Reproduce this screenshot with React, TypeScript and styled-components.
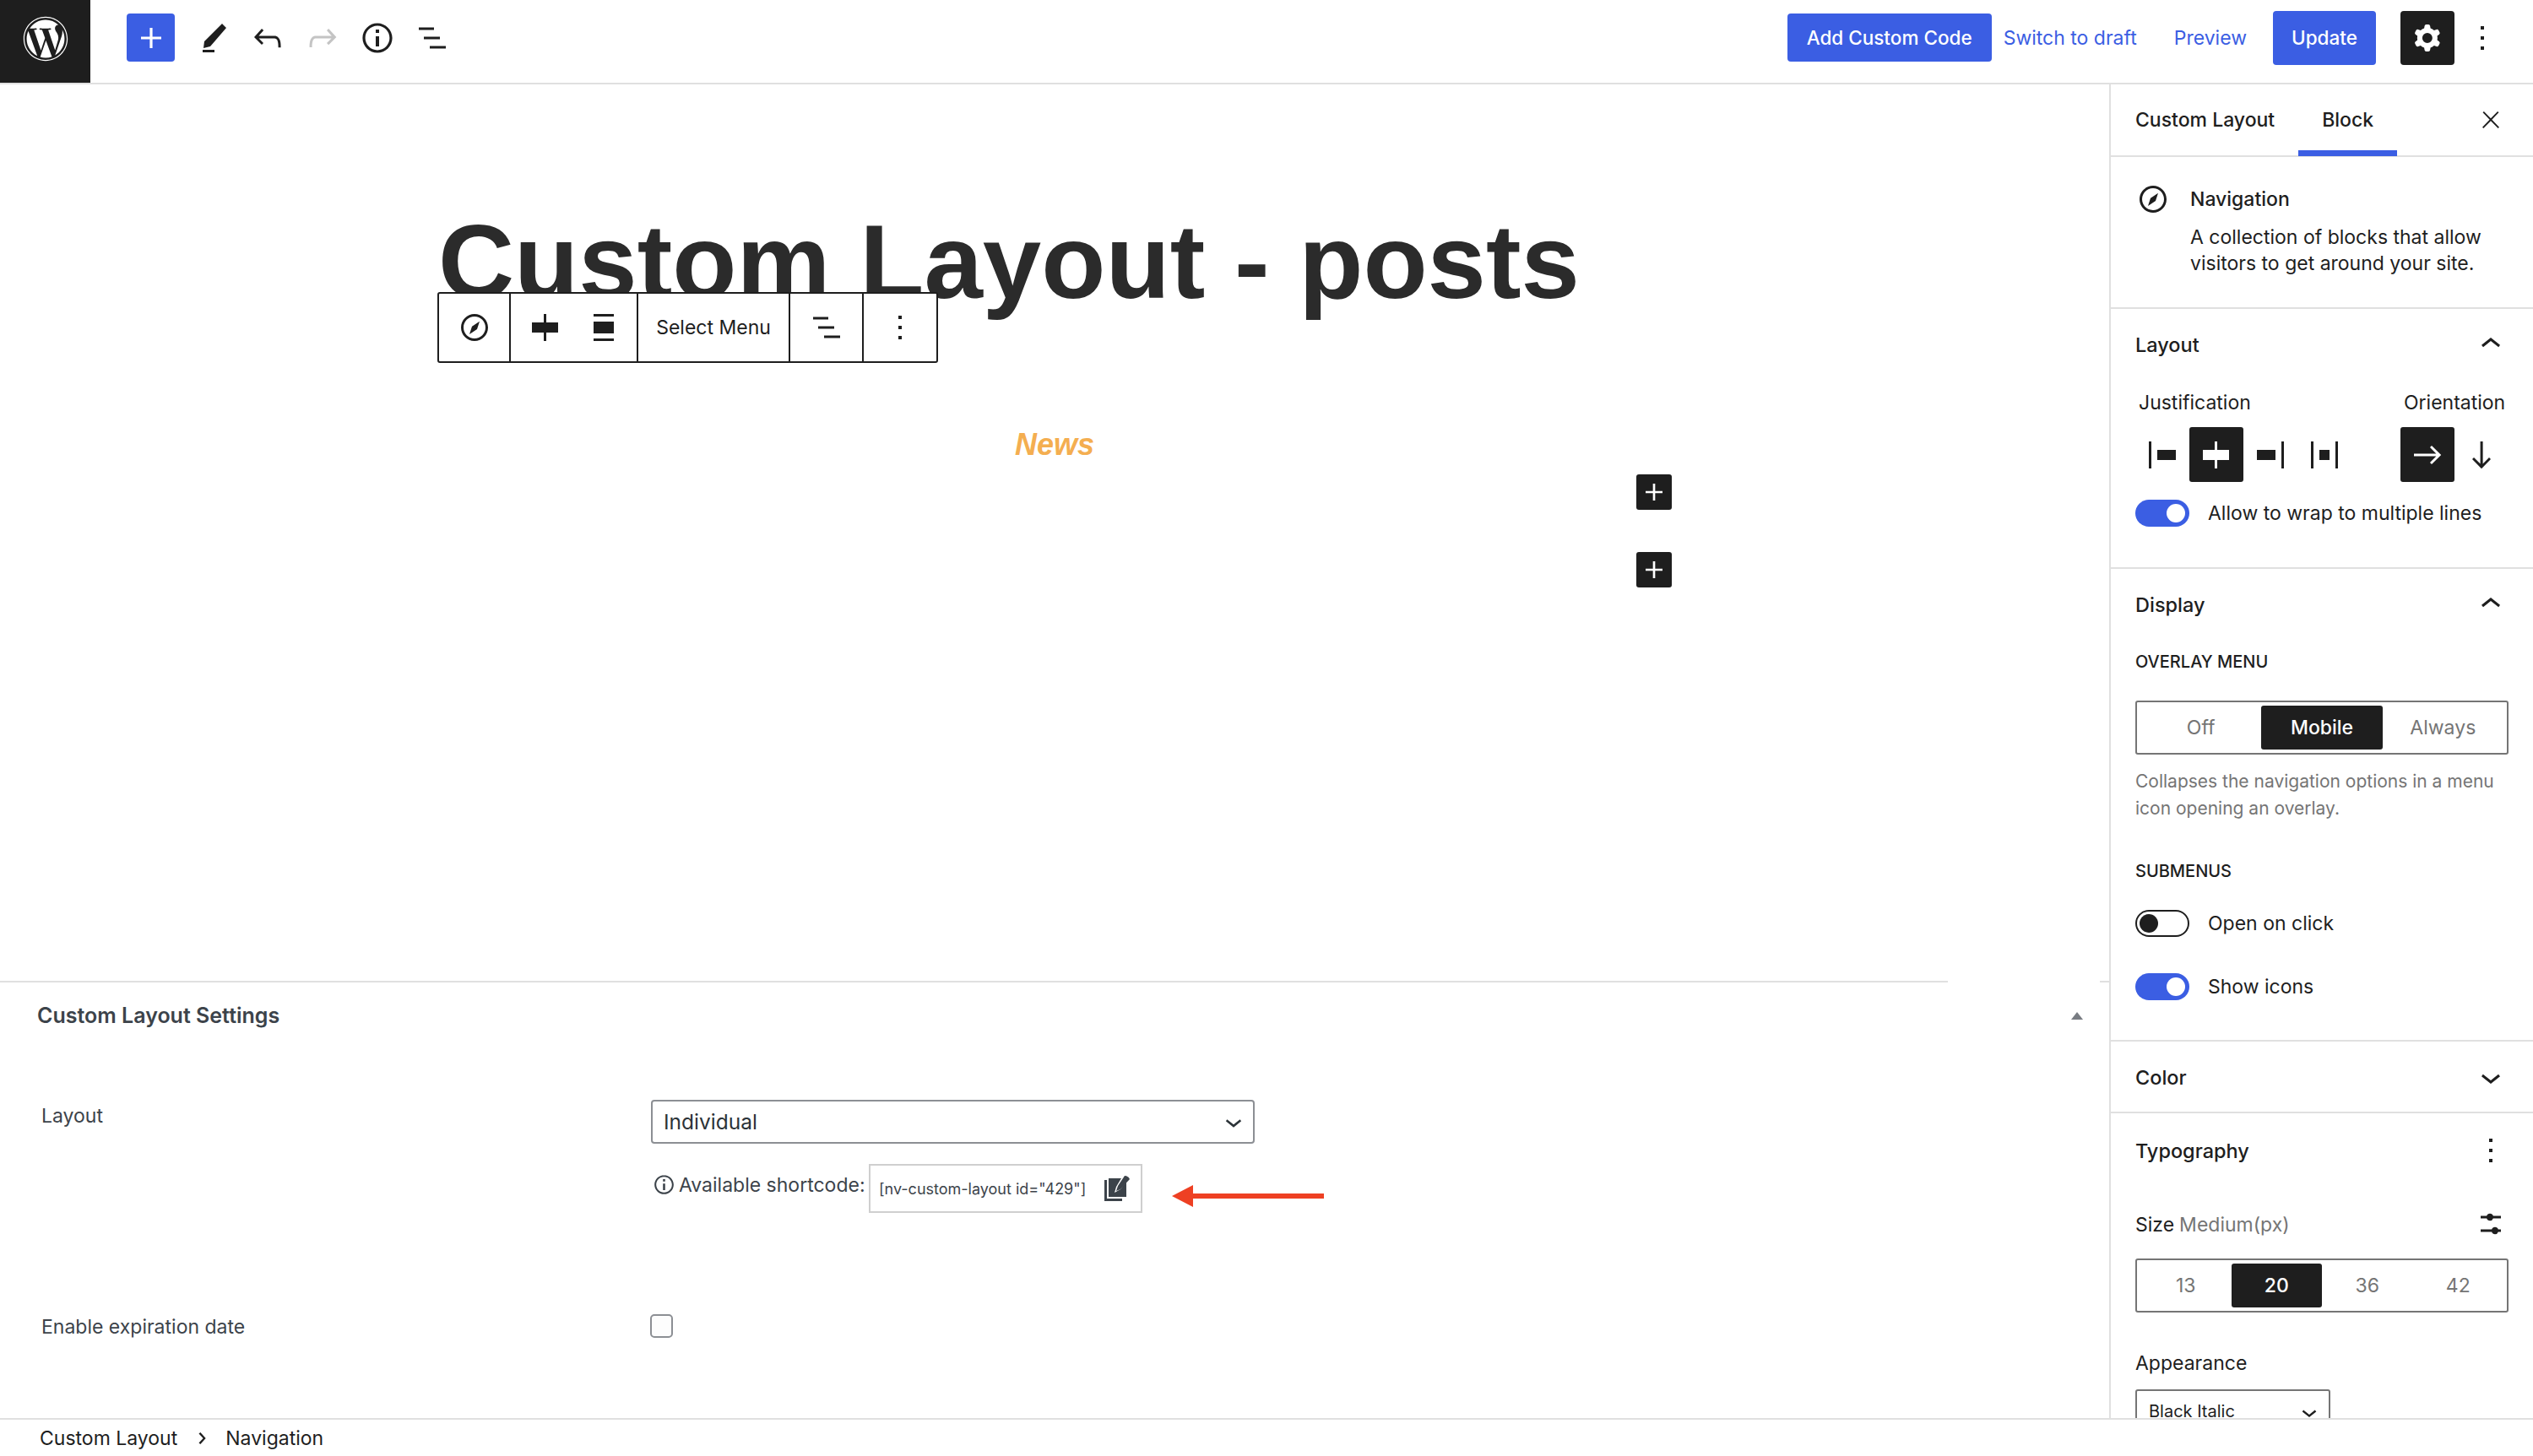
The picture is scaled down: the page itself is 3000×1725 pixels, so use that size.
import React from "react";
import styled, { createGlobalStyle } from "styled-components";
import { FaWordpress } from "react-icons/fa";

const GlobalStyle = createGlobalStyle`
  html, body {
    margin: 0;
    padding: 0;
    width: 3000px;
    height: 1725px;
    overflow: hidden;
    background: #fff;
  }
  * { box-sizing: border-box; }
  svg { flex: none; }
  body {
    font-family: "Inter", "Liberation Sans", sans-serif;
    color: #1e1e1e;
  }
`;

const BLUE = "#3b5ee3";
const DARK = "#1e1e1e";
const LINE = "#e0e0e0";

const Page = styled.div`
  width: 3000px;
  height: 1725px;
  display: flex;
  flex-direction: column;
`;

/* header */
const Header = styled.header`
  height: 100px;
  flex: none;
  display: flex;
  align-items: center;
  padding-bottom: 9px;
  padding-right: 36px;
  border-bottom: 2px solid ${LINE};
`;

const LogoTile = styled.div`
  align-self: flex-start;
  width: 107px;
  height: 98px;
  background: ${DARK};
  color: #fff;
  display: flex;
  align-items: center;
  justify-content: center;
  padding-bottom: 7px;
`;

const InserterButton = styled.button`
  width: 57px;
  height: 57px;
  margin: 0 12px 0 43px;
  border: 0;
  padding: 0;
  border-radius: 4px;
  background: ${BLUE};
  color: #fff;
  display: flex;
  align-items: center;
  justify-content: center;
`;

const ToolButton = styled.button<{ $muted?: boolean }>`
  width: 65px;
  height: 57px;
  border: 0;
  padding: 0;
  background: none;
  color: ${(p) => (p.$muted ? "#c4c4c4" : DARK)};
  display: flex;
  align-items: center;
  justify-content: center;
`;

const HeaderRight = styled.div`
  margin-left: auto;
  display: flex;
  align-items: center;
`;

const PrimaryButton = styled.button<{ $tall?: boolean; $w: number; $ml?: number }>`
  width: ${(p) => p.$w}px;
  height: ${(p) => (p.$tall ? 64 : 57)}px;
  margin-left: ${(p) => p.$ml ?? 0}px;
  border: 0;
  padding: 0;
  border-radius: 4px;
  background: ${BLUE};
  color: #fff;
  font: 500 22.5px "Inter", sans-serif;
`;

const TextLink = styled.span<{ $ml: number }>`
  margin-left: ${(p) => p.$ml}px;
  color: ${BLUE};
  font-size: 23px;
  white-space: nowrap;
`;

const GearButton = styled.button`
  width: 64px;
  height: 64px;
  margin-left: 29px;
  border: 0;
  padding: 0;
  border-radius: 4px;
  background: ${DARK};
  color: #fff;
  display: flex;
  align-items: center;
  justify-content: center;
`;

const MoreButton = styled.span`
  width: 48px;
  height: 48px;
  margin-left: 9px;
  display: flex;
  align-items: center;
  justify-content: center;
`;

/* body */
const Body = styled.div`
  flex: 1;
  min-height: 0;
  display: flex;
`;

const Main = styled.main`
  width: 2498px;
  flex: none;
  display: flex;
  flex-direction: column;
`;

const Canvas = styled.div`
  height: 1062px;
  flex: none;
`;

const BlockColumn = styled.div`
  position: relative;
  width: 1460px;
  margin: 0 auto;
  display: flex;
  flex-direction: column;
`;

const PostTitle = styled.h1`
  margin: 147px 0 0;
  font: 700 124.8px/125px "Liberation Sans", Arial, sans-serif;
  color: #2b2b2b;
  white-space: nowrap;
`;

const BlockToolbar = styled.div`
  position: absolute;
  left: -1px;
  top: 246px;
  width: 593px;
  height: 84px;
  display: flex;
  align-items: stretch;
  background: #fff;
  border: 2px solid ${DARK};
  border-radius: 3px;
`;

const ToolbarGroup = styled.div<{ $w: number; $last?: boolean }>`
  width: ${(p) => p.$w}px;
  flex: none;
  display: flex;
  align-items: center;
  justify-content: center;
  border-right: ${(p) => (p.$last ? "0" : `2px solid ${DARK}`)};
  font-size: 23px;
`;

const ToolbarIcon = styled.span`
  width: 67px;
  margin-left: 2px;
  display: flex;
  justify-content: center;
`;

const NewsLink = styled.div`
  margin-top: 133px;
  text-align: center;
  font: italic 700 36px/44px "Liberation Sans", Arial, sans-serif;
  color: #f4ae50;
`;

const AppenderButton = styled.button<{ $mt: number }>`
  align-self: flex-end;
  width: 42px;
  height: 42px;
  margin-top: ${(p) => p.$mt}px;
  margin-right: -1px;
  border: 0;
  padding: 0;
  border-radius: 3px;
  background: ${DARK};
  color: #fff;
  display: flex;
  align-items: center;
  justify-content: center;
`;

/* settings metabox */
const MetaBox = styled.section`
  flex: 1;
  min-height: 0;
  overflow: hidden;
`;

const MetaRule = styled.div`
  display: flex;
  gap: 180px;
`;

const MetaRuleSegment = styled.div<{ $w?: number }>`
  height: 2px;
  background: ${LINE};
  ${(p) => (p.$w ? `width: ${p.$w}px;` : "flex: 1;")}
`;

const MetaHead = styled.div`
  height: 78px;
  padding: 0 31px 0 44px;
  display: flex;
  align-items: center;
  justify-content: space-between;
  font-size: 25px;
  font-weight: 600;
  color: #3c434a;
`;

const Triangle = styled.span`
  width: 0;
  height: 0;
  border-left: 7px solid transparent;
  border-right: 7px solid transparent;
  border-bottom: 9px solid #787c82;
`;

const MetaField = styled.div<{ $mt: number }>`
  margin-top: ${(p) => p.$mt}px;
  padding-left: 49px;
  display: grid;
  grid-template-columns: 722px 1fr;
`;

const MetaLabel = styled.div<{ $pt?: number }>`
  padding-top: ${(p) => p.$pt ?? 0}px;
  font-size: 23px;
  line-height: 30px;
  color: #3c434a;
`;

const MetaSelect = styled.div`
  width: 715px;
  height: 52px;
  padding: 0 3px 0 13px;
  display: flex;
  align-items: center;
  justify-content: space-between;
  border: 2px solid #8c8f94;
  border-radius: 4px;
  font-size: 24.5px;
  color: #2c3338;
`;

const ShortcodeRow = styled.div`
  margin-top: 24px;
  display: flex;
  align-items: flex-start;
`;

const ShortcodeLabel = styled.div`
  width: 258px;
  padding-top: 9px;
  display: flex;
  align-items: center;
  gap: 2px;
  font-size: 23px;
  line-height: 30px;
  color: #3c434a;
  white-space: nowrap;
`;

const ShortcodeBox = styled.div`
  width: 324px;
  height: 58px;
  padding: 0 12px 0 10px;
  display: flex;
  align-items: center;
  justify-content: space-between;
  border: 2px solid #cfcfcf;
  font-size: 18px;
  color: #3c434a;
  white-space: nowrap;
`;

const ArrowMark = styled.svg`
  margin: 25px 0 0 35px;
  flex: none;
`;

const Checkbox = styled.span`
  display: block;
  width: 27px;
  height: 28px;
  margin-left: -1px;
  border: 2px solid #8c8f94;
  border-radius: 5px;
  background: #fdfdfd;
`;

/* sidebar */
const Sidebar = styled.aside`
  width: 502px;
  flex: none;
  border-left: 2px solid ${LINE};
  overflow: hidden;
`;

const TabBar = styled.div`
  height: 86px;
  display: flex;
  align-items: stretch;
  padding-left: 1px;
  border-bottom: 2px solid ${LINE};
`;

const Tab = styled.div<{ $active?: boolean }>`
  padding: 6px 28px 0;
  height: 85px;
  display: flex;
  align-items: center;
  font-size: 23px;
  font-weight: 500;
  border-bottom: 7px solid ${(p) => (p.$active ? BLUE : "transparent")};
`;

const CloseSlot = styled.span`
  margin: 0 26px 0 auto;
  width: 48px;
  display: flex;
  align-items: flex-start;
  justify-content: center;
  padding-top: 26px;
`;

const BlockCard = styled.div`
  padding: 35px 20px 36px 26px;
  display: flex;
  gap: 20px;
  border-bottom: 2px solid ${LINE};
`;

const CardIcon = styled.span`
  width: 48px;
  height: 30px;
  flex: none;
  display: flex;
  align-items: center;
  justify-content: center;
`;

const CardTitle = styled.div`
  font-size: 23px;
  font-weight: 500;
  line-height: 30px;
`;

const CardText = styled.div`
  margin-top: 15px;
  font-size: 23px;
  line-height: 31px;
`;

const Section = styled.section<{ $pt?: number; $pb?: number }>`
  padding: ${(p) => p.$pt ?? 0}px 29px ${(p) => p.$pb ?? 48}px;
  border-bottom: 2px solid ${LINE};
`;

const SectionHead = styled.div`
  height: 83px;
  padding: 27px 0 26px;
  display: flex;
  align-items: center;
  justify-content: space-between;
  font-size: 23.5px;
  font-weight: 500;
`;

const HeadIcon = styled.span`
  width: 48px;
  height: 48px;
  margin-right: -3px;
  display: flex;
  align-items: center;
  justify-content: center;
`;

const ControlsRow = styled.div`
  margin-top: 13px;
  display: flex;
  justify-content: space-between;
`;

const ControlGroup = styled.div`
  display: flex;
  flex-direction: column;
`;

const GroupLabel = styled.div`
  padding-left: 4px;
  font-size: 23px;
  line-height: 30px;
`;

const IconChoices = styled.div`
  margin-top: 14px;
  display: flex;
`;

const IconChoice = styled.span<{ $active?: boolean }>`
  width: 64px;
  height: 65px;
  display: flex;
  align-items: center;
  justify-content: center;
  border-radius: 3px;
  background: ${(p) => (p.$active ? DARK : "transparent")};
  color: ${(p) => (p.$active ? "#fff" : DARK)};
`;

const ToggleRow = styled.div<{ $mt: number }>`
  margin-top: ${(p) => p.$mt}px;
  display: flex;
  align-items: center;
  gap: 22px;
  font-size: 23px;
`;

const ToggleTrack = styled.span<{ $on?: boolean }>`
  position: relative;
  width: 64px;
  height: 32px;
  flex: none;
  border-radius: 16px;
  border: ${(p) => (p.$on ? "0" : `2px solid ${DARK}`)};
  background: ${(p) => (p.$on ? BLUE : "#fff")};
`;

const ToggleKnob = styled.span<{ $on?: boolean }>`
  position: absolute;
  top: ${(p) => (p.$on ? 5 : 3)}px;
  ${(p) => (p.$on ? "right: 5px;" : "left: 3px;")}
  width: 22px;
  height: 22px;
  border-radius: 50%;
  background: ${(p) => (p.$on ? "#fff" : DARK)};
`;

const CapsLabel = styled.div<{ $mt: number }>`
  margin-top: ${(p) => p.$mt}px;
  font-size: 20px;
  font-weight: 500;
  line-height: 26px;
`;

const Segmented = styled.div<{ $mt: number }>`
  margin-top: ${(p) => p.$mt}px;
  height: 64px;
  padding: 4px;
  display: flex;
  border: 2px solid #757575;
  border-radius: 3px;
`;

const Segment = styled.span<{ $active?: boolean }>`
  flex: 1;
  display: flex;
  align-items: center;
  justify-content: center;
  border-radius: 3px;
  background: ${(p) => (p.$active ? DARK : "transparent")};
  color: ${(p) => (p.$active ? "#fff" : "#757575")};
  font-size: 23px;
  font-weight: ${(p) => (p.$active ? 500 : 400)};
`;

const HelpText = styled.div`
  margin-top: 16px;
  font-size: 21px;
  line-height: 32px;
  color: #757575;
  white-space: nowrap;
`;

const SizeRow = styled.div`
  margin-top: 32px;
  height: 30px;
  display: flex;
  align-items: center;
  justify-content: space-between;
  font-size: 23px;
`;

const SizeHint = styled.span`
  color: #757575;
  margin-left: 6px;
`;

const FieldLabel = styled.div`
  margin-top: 45px;
  font-size: 23px;
  line-height: 30px;
`;

const AppearanceSelect = styled.div`
  margin-top: 16px;
  width: 231px;
  height: 64px;
  padding: 7px 5px 0 14px;
  display: flex;
  align-items: flex-start;
  justify-content: space-between;
  border: 2px solid #757575;
  border-radius: 3px;
  font-size: 20px;
  line-height: 34px;
`;

/* footer */
const Breadcrumbs = styled.footer`
  height: 45px;
  flex: none;
  display: flex;
  align-items: center;
  padding-left: 47px;
  border-top: 2px solid ${LINE};
  font-size: 23px;
`;

const CrumbSep = styled.span`
  width: 57px;
  display: flex;
  justify-content: center;
`;

/* gutenberg style icons, all drawn on a 24 unit grid */
const paths = {
  plus: "M18 11.2h-5.2V6h-1.6v5.2H6v1.6h5.2V18h1.6v-5.2H18z",
  undo: "M18.3 11.7c-.6-.6-1.4-.9-2.3-.9H6.7l2.9-3.3-1.1-1-4.5 5L8.5 16l1-1-2.7-2.7H16c.5 0 .9.2 1.3.5 1 1 1 3.4 1 4.5v.3h1.5v-.2c0-1.5 0-4.3-1.5-5.7z",
  redo: "M15.6 6.5l-1.1 1 2.9 3.3H8c-.9 0-1.7.3-2.3.9-1.4 1.5-1.4 4.2-1.4 5.6v.2h1.5v-.3c0-1.1 0-3.5 1-4.5.3-.3.7-.5 1.3-.5h9.2L14.5 15l1.1 1.1 4.6-4.6-4.6-5z",
  info: "M12 3.2c-4.8 0-8.8 3.9-8.8 8.8 0 4.8 3.9 8.8 8.8 8.8 4.8 0 8.8-3.9 8.8-8.8 0-4.8-4-8.8-8.8-8.8zm0 16c-4 0-7.2-3.3-7.2-7.2C4.8 8 8 4.8 12 4.8s7.2 3.3 7.2 7.2c0 4-3.2 7.2-7.2 7.2zM11 17h2v-6h-2v6zm0-8h2V7h-2v2z",
  pen: "M17.5 3.5 20 6l-9.5 11-4 1 .5-4zM6 19h7v1.5H6z",
  list: "M4 5.75h9v1.5H4zM7 11.25h9.5v1.5H7zM10.5 16.75H20v1.5h-9.5z",
  compass:
    "M12 4c-4.4 0-8 3.6-8 8s3.6 8 8 8 8-3.6 8-8-3.6-8-8-8zm0 14.5c-3.6 0-6.5-2.9-6.5-6.5S8.4 5.5 12 5.5s6.5 2.9 6.5 6.5-2.9 6.5-6.5 6.5zM9 16l4.5-3L15 8.4l-4.5 3L9 16z",
  gear: "M10.289 4.836A1 1 0 0111.275 4h1.306a1 1 0 01.987.836l.244 1.466c.787.26 1.503.679 2.108 1.218l1.393-.522a1 1 0 011.216.437l.653 1.13a1 1 0 01-.23 1.273l-1.148.944a6.025 6.025 0 010 2.435l1.149.946a1 1 0 01.23 1.272l-.653 1.13a1 1 0 01-1.216.437l-1.394-.522c-.605.54-1.32.958-2.108 1.218l-.244 1.466a1 1 0 01-.987.836h-1.306a1 1 0 01-.986-.836l-.244-1.466a5.995 5.995 0 01-2.108-1.218l-1.394.522a1 1 0 01-1.217-.436l-.653-1.131a1 1 0 01.23-1.272l1.149-.946a6.026 6.026 0 010-2.435l-1.148-.944a1 1 0 01-.23-1.272l.653-1.131a1 1 0 011.217-.437l1.393.522a5.994 5.994 0 012.108-1.218l.244-1.466zM14.929 12a3 3 0 11-6 0 3 3 0 016 0z",
  more: "M13 19h-2v-2h2v2zm0-6h-2v-2h2v2zm0-6h-2V5h2v2z",
  close:
    "M13 11.8l6.1-6.3-1-1-6.1 6.2-6.1-6.2-1 1 6.1 6.3-6.5 6.7 1 1 6.5-6.6 6.5 6.6 1-1z",
  chevronUp: "M6.5 12.4L12 8l5.5 4.4-.9 1.2L12 10l-4.5 3.6-1-1.2z",
  chevronDown: "M17.5 11.6L12 16l-5.5-4.4.9-1.2L12 14l4.5-3.6 1 1.2z",
  chevronRight: "M10.6 6 9 7.2l4.4 4.8L9 16.8l1.6 1.2 5.4-6z",
  justifyLeft: "M9 9v6h11V9H9zM4 20h1.5V4H4v16z",
  justifyCenter: "M12.5 15v5H11v-5H4V9h7V4h1.5v5h7v6h-7Z",
  justifyRight: "M4 15h11V9H4v6zM18.5 4v16H20V4h-1.5z",
  justifyBetween: "M9 15h6V9H9v6zm-5 5h1.5V4H4v16zM18.5 4v16H20V4h-1.5z",
  stretch: "M6 4h12v1.5H6zM6 18.5h12V20H6zM6 8.5h12v7H6z",
  arrowRight: "m14.5 6.5-1 1 3.7 3.7H4v1.6h13.2l-3.7 3.7 1 1 5.6-5.5z",
  arrowDown:
    "m16.5 13.5-3.7 3.7V4h-1.5v13.2l-3.8-3.7-1 1 5.5 5.6 5.5-5.6z",
  sliders:
    "M6 6.75h3.6a2 2 0 0 1 3.8 0H18v1.5h-4.6a2 2 0 0 1-3.8 0H6zM6 14.75h6.6a2 2 0 0 1 3.8 0H18v1.5h-1.6a2 2 0 0 1-3.8 0H6z",
};

const Icon = ({ name, size = 48 }: { name: keyof typeof paths; size?: number }) => (
  <svg
    width={size}
    height={size}
    viewBox="0 0 24 24"
    fill="currentColor"
    fillRule="evenodd"
  >
    <path d={paths[name]} />
  </svg>
);

const CopyIcon = () => (
  <svg width="32" height="32" viewBox="0 0 32 32" fill="#3c434a">
    <path d="M1 6h3v22h18v3H1z" />
    <path d="M6 4h15l-6 10-2 7 7-4 7-9v18H6z" />
    <path d="M25 1c3 0 5 2 6 4l-11 12-5 2 2-6z" />
  </svg>
);

const Toggle = ({ on }: { on?: boolean }) => (
  <ToggleTrack $on={on}>
    <ToggleKnob $on={on} />
  </ToggleTrack>
);

export default function App() {
  return (
    <Page>
      <GlobalStyle />
      <Header>
        <LogoTile>
          <FaWordpress size={54} />
        </LogoTile>
        <InserterButton>
          <Icon name="plus" />
        </InserterButton>
        <ToolButton>
          <Icon name="pen" />
        </ToolButton>
        <ToolButton>
          <Icon name="undo" />
        </ToolButton>
        <ToolButton $muted>
          <Icon name="redo" />
        </ToolButton>
        <ToolButton>
          <Icon name="info" />
        </ToolButton>
        <ToolButton>
          <Icon name="list" />
        </ToolButton>
        <HeaderRight>
          <PrimaryButton $w={242}>Add Custom Code</PrimaryButton>
          <TextLink $ml={14}>Switch to draft</TextLink>
          <TextLink $ml={44}>Preview</TextLink>
          <PrimaryButton $tall $w={122} $ml={31}>
            Update
          </PrimaryButton>
          <GearButton>
            <Icon name="gear" />
          </GearButton>
          <MoreButton>
            <Icon name="more" />
          </MoreButton>
        </HeaderRight>
      </Header>

      <Body>
        <Main>
          <Canvas>
            <BlockColumn>
              <PostTitle>Custom Layout - posts</PostTitle>
              <BlockToolbar>
                <ToolbarGroup $w={85}>
                  <Icon name="compass" />
                </ToolbarGroup>
                <ToolbarGroup $w={151}>
                  <ToolbarIcon>
                    <Icon name="justifyCenter" />
                  </ToolbarIcon>
                  <ToolbarIcon>
                    <Icon name="stretch" />
                  </ToolbarIcon>
                </ToolbarGroup>
                <ToolbarGroup $w={180}>Select Menu</ToolbarGroup>
                <ToolbarGroup $w={87}>
                  <Icon name="list" />
                </ToolbarGroup>
                <ToolbarGroup $w={86} $last>
                  <Icon name="more" />
                </ToolbarGroup>
              </BlockToolbar>
              <NewsLink>News</NewsLink>
              <AppenderButton $mt={13}>
                <Icon name="plus" size={40} />
              </AppenderButton>
              <AppenderButton $mt={50}>
                <Icon name="plus" size={40} />
              </AppenderButton>
            </BlockColumn>
          </Canvas>
          <MetaBox>
            <MetaRule>
              <MetaRuleSegment $w={2307} />
              <MetaRuleSegment />
            </MetaRule>
            <MetaHead>
              Custom Layout Settings
              <Triangle />
            </MetaHead>
            <MetaField $mt={61}>
              <MetaLabel $pt={4}>Layout</MetaLabel>
              <div>
                <MetaSelect>
                  Individual
                  <Icon name="chevronDown" size={40} />
                </MetaSelect>
                <ShortcodeRow>
                  <ShortcodeLabel>
                    <Icon name="info" size={31} />
                    Available shortcode:
                  </ShortcodeLabel>
                  <ShortcodeBox>
                    [nv-custom-layout id="429"]
                    <CopyIcon />
                  </ShortcodeBox>
                  <ArrowMark width="180" height="26" viewBox="0 0 180 26">
                    <path d="M0 13 25 0v10h155v6H25v10z" fill="#ee4023" />
                  </ArrowMark>
                </ShortcodeRow>
              </div>
            </MetaField>
            <MetaField $mt={120}>
              <MetaLabel>Enable expiration date</MetaLabel>
              <Checkbox />
            </MetaField>
          </MetaBox>
        </Main>

        <Sidebar>
          <TabBar>
            <Tab>Custom Layout</Tab>
            <Tab $active>Block</Tab>
            <CloseSlot>
              <Icon name="close" size={32} />
            </CloseSlot>
          </TabBar>
          <BlockCard>
            <CardIcon>
              <Icon name="compass" />
            </CardIcon>
            <div>
              <CardTitle>Navigation</CardTitle>
              <CardText>
                A collection of blocks that allow
                <br />
                visitors to get around your site.
              </CardText>
            </div>
          </BlockCard>

          <Section>
            <SectionHead>
              Layout
              <HeadIcon>
                <Icon name="chevronUp" />
              </HeadIcon>
            </SectionHead>
            <ControlsRow>
              <ControlGroup>
                <GroupLabel>Justification</GroupLabel>
                <IconChoices>
                  <IconChoice>
                    <Icon name="justifyLeft" />
                  </IconChoice>
                  <IconChoice $active>
                    <Icon name="justifyCenter" />
                  </IconChoice>
                  <IconChoice>
                    <Icon name="justifyRight" />
                  </IconChoice>
                  <IconChoice>
                    <Icon name="justifyBetween" />
                  </IconChoice>
                </IconChoices>
              </ControlGroup>
              <ControlGroup>
                <GroupLabel>Orientation</GroupLabel>
                <IconChoices>
                  <IconChoice $active>
                    <Icon name="arrowRight" />
                  </IconChoice>
                  <IconChoice>
                    <Icon name="arrowDown" />
                  </IconChoice>
                </IconChoices>
              </ControlGroup>
            </ControlsRow>
            <ToggleRow $mt={21}>
              <Toggle on />
              Allow to wrap to multiple lines
            </ToggleRow>
          </Section>

          <Section $pb={47}>
            <SectionHead>
              Display
              <HeadIcon>
                <Icon name="chevronUp" />
              </HeadIcon>
            </SectionHead>
            <CapsLabel $mt={14}>OVERLAY MENU</CapsLabel>
            <Segmented $mt={33}>
              <Segment>Off</Segment>
              <Segment $active>Mobile</Segment>
              <Segment>Always</Segment>
            </Segmented>
            <HelpText>
              Collapses the navigation options in a menu
              <br />
              icon opening an overlay.
            </HelpText>
            <CapsLabel $mt={45}>SUBMENUS</CapsLabel>
            <ToggleRow $mt={33}>
              <Toggle />
              Open on click
            </ToggleRow>
            <ToggleRow $mt={43}>
              <Toggle on />
              Show icons
            </ToggleRow>
          </Section>

          <Section $pb={0}>
            <SectionHead>
              Color
              <HeadIcon>
                <Icon name="chevronDown" />
              </HeadIcon>
            </SectionHead>
          </Section>

          <Section $pt={2} $pb={0}>
            <SectionHead>
              Typography
              <HeadIcon>
                <Icon name="more" />
              </HeadIcon>
            </SectionHead>
            <SizeRow>
              <span>
                Size<SizeHint>Medium(px)</SizeHint>
              </span>
              <HeadIcon>
                <Icon name="sliders" />
              </HeadIcon>
            </SizeRow>
            <Segmented $mt={25}>
              <Segment>13</Segment>
              <Segment $active>20</Segment>
              <Segment>36</Segment>
              <Segment>42</Segment>
            </Segmented>
            <FieldLabel>Appearance</FieldLabel>
            <AppearanceSelect>
              Black Italic
              <Icon name="chevronDown" size={36} />
            </AppearanceSelect>
          </Section>
        </Sidebar>
      </Body>

      <Breadcrumbs>
        Custom Layout
        <CrumbSep>
          <Icon name="chevronRight" size={28} />
        </CrumbSep>
        Navigation
      </Breadcrumbs>
    </Page>
  );
}
